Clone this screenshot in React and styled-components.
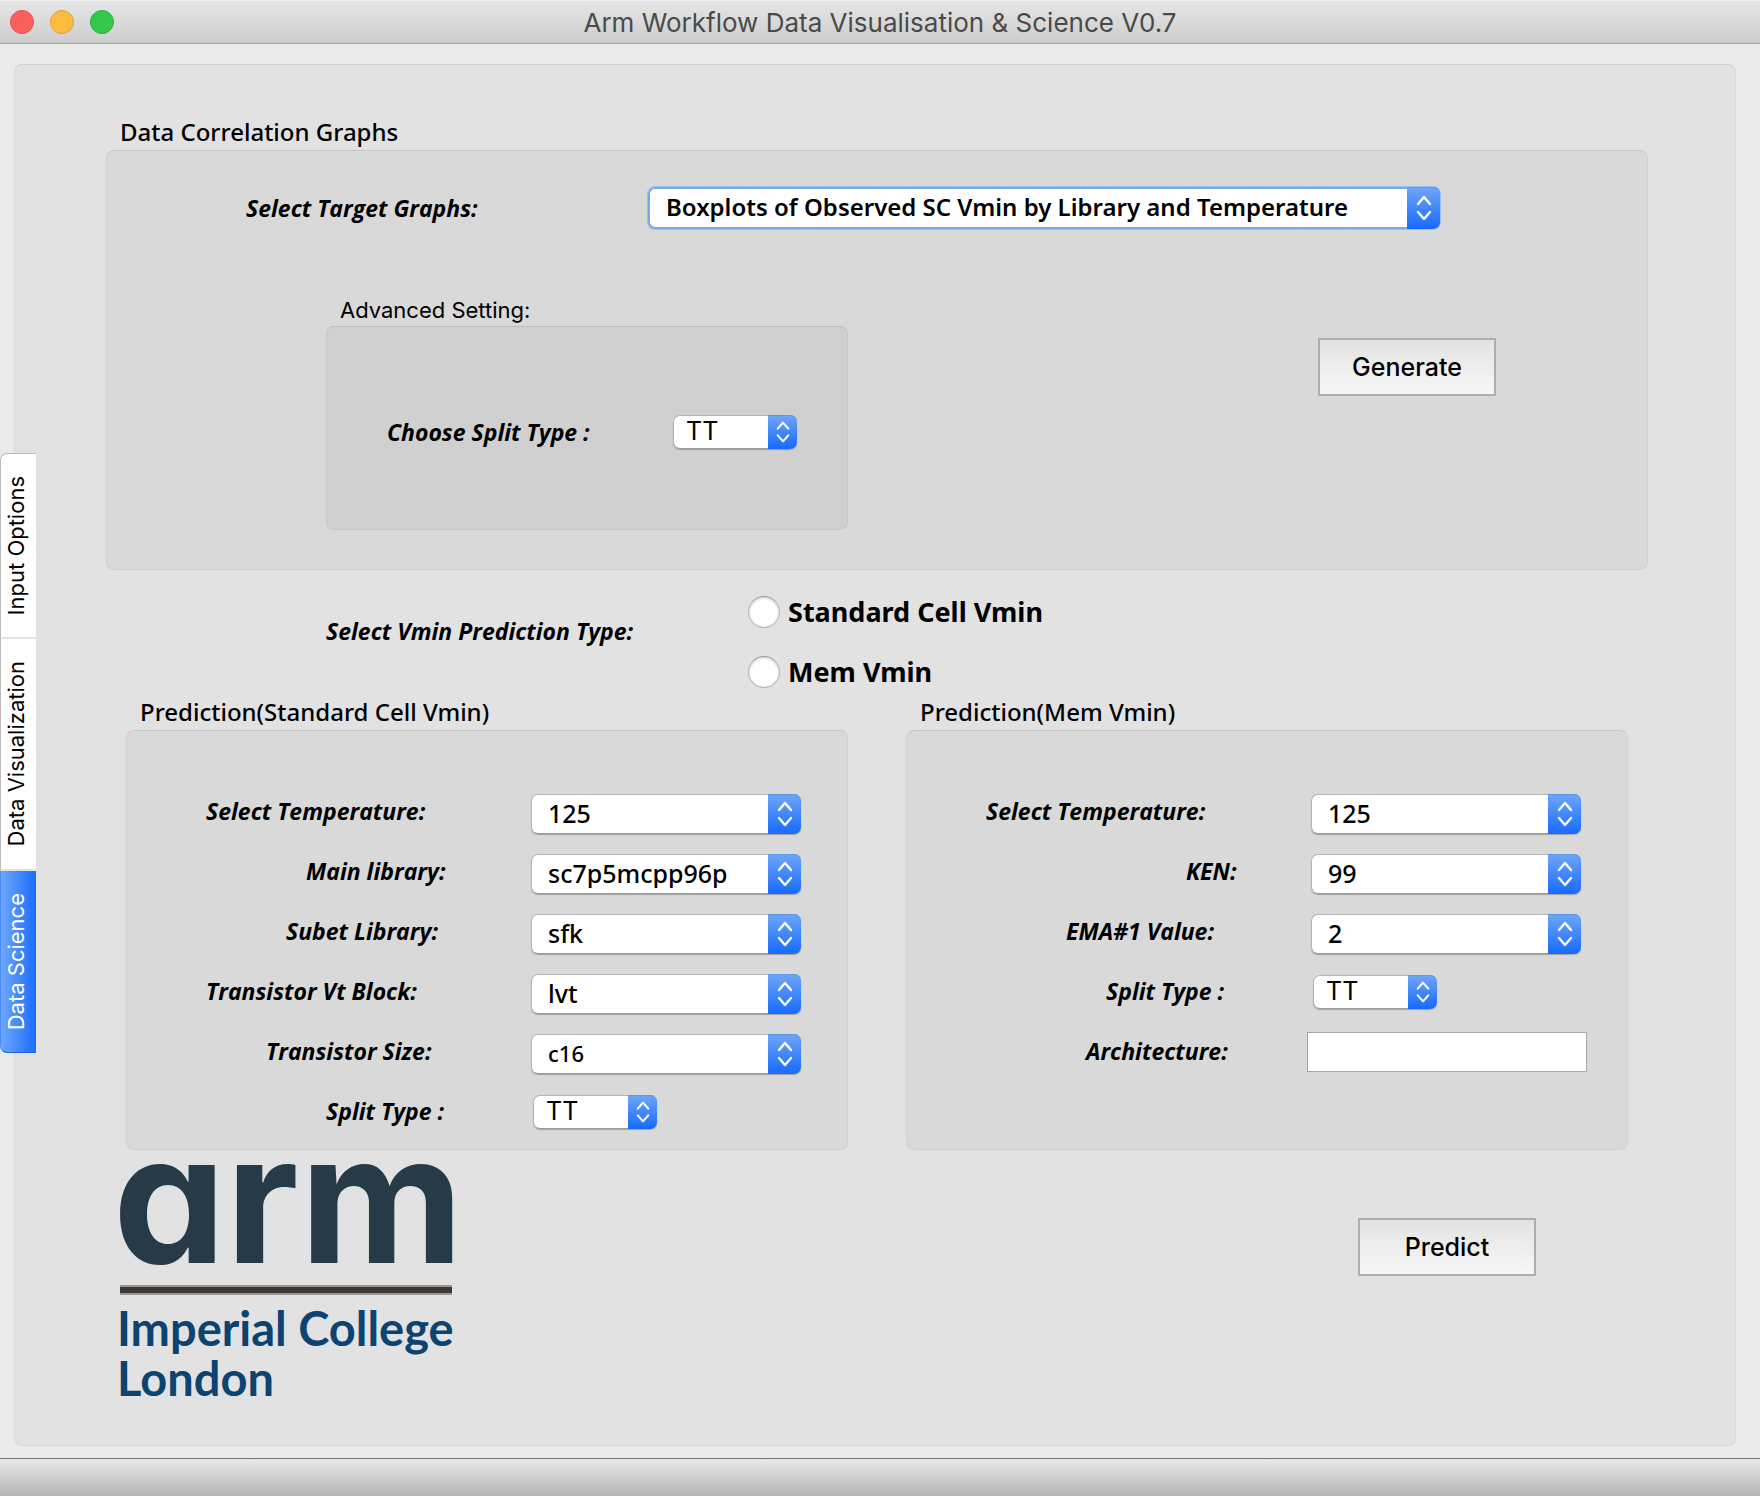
import React from "react";
import styled, { createGlobalStyle, css } from "styled-components";

const systemFont = `Inter, "Liberation Sans", sans-serif`;
const formFont = `"Noto Sans", "Open Sans", sans-serif`;
const labelFont = `"Open Sans", "Noto Sans", sans-serif`;

const GlobalStyle = createGlobalStyle`
  *, *::before, *::after { box-sizing: border-box; }
  body { margin: 0; background: #ebebeb; color: #000; }
`;

const Window = styled.div`
  display: flex;
  flex-direction: column;
  min-height: 100vh;
  font-family: ${systemFont};
`;

const TitleBar = styled.header`
  display: grid;
  grid-template-columns: 140px 1fr 140px;
  align-items: center;
  height: 44px;
  padding: 0 10px;
  background: linear-gradient(#e6e6e6, #cdcdcd);
  border-top: 1px solid #f2f2f2;
  border-bottom: 1px solid #a3a3a3;
`;

const Lights = styled.div`
  display: flex;
  gap: 16px;
`;

const Light = styled.button`
  width: 24px;
  height: 24px;
  padding: 0;
  border: 1px solid ${(p) => p.$edge};
  border-radius: 50%;
  background: ${(p) => p.$fill};
`;

const Title = styled.h1`
  margin: 0;
  padding-top: 2px;
  font-size: 26px;
  line-height: 32px;
  font-weight: 400;
  text-align: center;
  color: #4a4a4a;
`;

const Body = styled.main`
  position: relative;
  flex: 1;
  display: flex;
  padding: 20px 24px 12px 14px;
`;

const TabList = styled.nav`
  position: absolute;
  left: 0;
  top: 4px;
  bottom: 0;
  display: flex;
  flex-direction: column;
  justify-content: center;
`;

const Tab = styled.button`
  display: flex;
  align-items: center;
  justify-content: center;
  width: 36px;
  padding: 22px 6px 22px 0;
  border: 0;
  border-left: 1px solid #b9b9b9;
  border-bottom: 2px solid #e2e2e2;
  background: #fff;
  color: #000;
  font-family: inherit;
  font-size: 22px;
  line-height: 30px;

  &:first-child {
    border-top: 1px solid #b9b9b9;
    border-top-left-radius: 7px;
  }
  &:last-child {
    border-bottom-left-radius: 7px;
  }
  ${(p) =>
    p.$active &&
    css`
      border-left-color: #4a8df5;
      border-bottom: 1px solid #1d62e0;
      background: linear-gradient(90deg, #6ea6fb, #1a6dfc);
      color: #fff;
    `}
`;

const TabText = styled.span`
  writing-mode: vertical-rl;
  transform: rotate(180deg);
`;

const Page = styled.div`
  flex: 1;
  padding: 50px 87px 40px 91px;
  border: 1px solid #d9d9d9;
  border-top-color: #cecece;
  border-radius: 8px;
  background: #e2e2e2;
`;

const GroupTitle = styled.h2`
  margin: 0;
  padding: 0 14px ${(p) => (p.$plain ? 0 : 2)}px;
  font-family: ${(p) => (p.$plain ? systemFont : formFont)};
  font-size: ${(p) => (p.$plain ? 22 : 24)}px;
  line-height: ${(p) => (p.$plain ? 32 : 33)}px;
  font-weight: ${(p) => (p.$plain ? 400 : 500)};
`;

const Box = styled.div`
  border: 1px solid ${(p) => (p.$deep ? "#c8c8c8" : "#d0d0d0")};
  border-top-color: ${(p) => (p.$deep ? "#bdbdbd" : "#c6c6c6")};
  border-radius: 8px;
  background: ${(p) => (p.$deep ? "#d0d0d0" : "#d9d9d9")};
`;

const GraphBox = styled(Box)`
  min-height: 420px;
  padding: 36px 151px 39px 139px;
`;

const TargetRow = styled.div`
  display: grid;
  grid-template-columns: 402px 1fr;
  align-items: center;
  padding-right: 56px;
`;

const SettingRow = styled.div`
  display: flex;
  justify-content: space-between;
  align-items: flex-start;
  margin-top: 65px;
  padding-left: 80px;
`;

const SettingBox = styled(Box)`
  display: flex;
  align-items: center;
  justify-content: space-between;
  width: 522px;
  height: 204px;
  padding: 8px 50px 0 60px;
`;

const FieldLabel = styled.label`
  padding-left: ${(p) => p.$indent || 0}px;
  font-family: ${labelFont};
  font-size: 23px;
  line-height: 32px;
  font-weight: 700;
  font-style: italic;
  white-space: nowrap;
`;

const Button = styled.button`
  width: 178px;
  height: 58px;
  border: 2px solid #adadad;
  background: linear-gradient(#e3e3e3, #f7f7f7);
  font-family: inherit;
  font-size: 25px;
  line-height: 32px;
  font-weight: 500;
  color: #000;
`;

const GenerateButton = styled(Button)`
  margin-top: 44px;
`;

const SelectWrap = styled.span`
  display: grid;
  width: ${(p) => p.$width};
  height: ${(p) => (p.$small ? 34 : 40)}px;
  border-radius: 7px;
  box-shadow: 0 1px 1px rgba(0, 0, 0, 0.25);
  ${(p) =>
    p.$focused &&
    css`
      height: 42px;
      box-shadow: 0 0 0 1px #9cc0ee;
    `}
`;

const NativeSelect = styled.select`
  grid-area: 1 / 1;
  appearance: none;
  width: 100%;
  min-width: 0;
  padding: 0 36px 2px ${(p) => (p.$small ? 12 : 16)}px;
  border: 1px solid #b4b4b4;
  border-bottom-color: #9a9a9a;
  border-radius: 7px;
  background: #fff;
  color: #000;
  font-family: ${(p) => (p.$small ? systemFont : formFont)};
  font-size: ${(p) => (p.$compact ? 22 : 25)}px;
  line-height: 30px;
  font-weight: ${(p) => (p.$small ? 400 : 500)};
  ${(p) =>
    p.$focused &&
    css`
      border: 2px solid #7aa8e2;
      font-size: 24px;
      font-weight: 600;
    `}
`;

const Stepper = styled.span`
  grid-area: 1 / 1;
  justify-self: end;
  display: flex;
  align-items: center;
  justify-content: center;
  width: ${(p) => (p.$small ? 29 : 33)}px;
  border-radius: 0 7px 7px 0;
  background: linear-gradient(#6ea6f8, #176afd);
  box-shadow: inset 0 1px 0 #5f97e6;
  pointer-events: none;
`;

function Select({ id, value, width = "270px", small, compact, focused }) {
  return (
    <SelectWrap $width={small ? "124px" : width} $small={small} $focused={focused}>
      <NativeSelect id={id} defaultValue={value} $small={small} $compact={compact} $focused={focused}>
        <option>{value}</option>
      </NativeSelect>
      <Stepper $small={small}>
        <svg width={small ? 14 : 16} height={small ? 22 : 26} viewBox="0 0 16 26" preserveAspectRatio="none" fill="none" stroke="#fff" strokeWidth="2.4" strokeLinecap="round" strokeLinejoin="round">
          <path d="M2 9 8 2l6 7M2 17l6 7 6-7" />
        </svg>
      </Stepper>
    </SelectWrap>
  );
}

const PredictionType = styled.fieldset`
  display: flex;
  margin: 12px 0 0;
  padding: 0 0 0 220px;
  border: 0;
`;

const TypeCaption = styled.div`
  display: flex;
  align-items: center;
  width: 422px;
  padding-bottom: 22px;
`;

const RadioList = styled.div`
  display: flex;
  flex-direction: column;
`;

const RadioLabel = styled.label`
  display: flex;
  align-items: center;
  gap: 8px;
  height: 60px;
  font-family: ${formFont};
  font-size: 27px;
  line-height: 32px;
  font-weight: 700;
`;

const Radio = styled.input`
  appearance: none;
  width: 32px;
  height: 32px;
  margin: 0;
  border: 1px solid #b5b5b5;
  border-top-color: #999;
  border-radius: 50%;
  background: #fff;
  box-shadow: inset 0 1px 3px rgba(0, 0, 0, 0.2);
`;

const Predictions = styled.div`
  display: grid;
  grid-template-columns: 1fr 1fr;
  gap: 58px;
  margin: -7px 20px 0 20px;
`;

const PredictionBox = styled(Box)`
  display: flex;
  flex-direction: column;
  height: 420px;
  padding: 53px 40px 0 79px;
`;

const FieldRow = styled.div`
  display: flex;
  align-items: center;
  justify-content: space-between;
  height: 60px;

  ${FieldLabel} {
    padding-bottom: 6px;
  }
`;

const FieldControl = styled.div`
  display: flex;
  width: 280px;
  padding-left: ${(p) => p.$inset}px;
  padding-bottom: ${(p) => (p.$raised ? 4 : 0)}px;
`;

const TextInput = styled.input`
  width: 100%;
  height: 40px;
  padding: 0 8px;
  border: 1px solid #a6a6a6;
  background: #fff;
  font-family: ${formFont};
  font-size: 24px;
`;

const Footer = styled.footer`
  display: flex;
  justify-content: space-between;
  align-items: flex-start;
  padding: 12px 112px 0 14px;
`;

const Logo = styled.svg`
  display: block;
  width: 336px;
  height: 236px;
  overflow: visible;
`;

const Wordmark = styled.text`
  font-family: Inter, sans-serif;
  font-size: 179px;
  font-weight: 700;
  font-feature-settings: "cv11";
  fill: #263a47;
`;

const PredictButton = styled(Button)`
  margin-top: 56px;
`;

const StatusBar = styled.div`
  height: 38px;
  border-top: 1px solid #6e6e6e;
  background: linear-gradient(#e8e8e8, #b4b4b4);
`;

const standardFields = [
  { id: "std-temp", label: "Select Temperature:", indent: 0, value: "125" },
  { id: "std-main", label: "Main library:", indent: 100, value: "sc7p5mcpp96p" },
  { id: "std-subset", label: "Subet Library:", indent: 80, value: "sfk" },
  { id: "std-vt", label: "Transistor Vt Block:", indent: 0, value: "lvt" },
  { id: "std-size", label: "Transistor Size:", indent: 60, value: "c16", compact: true },
  { id: "std-split", label: "Split Type :", indent: 120, value: "TT", small: true },
];

const memFields = [
  { id: "mem-temp", label: "Select Temperature:", indent: 0, value: "125" },
  { id: "mem-ken", label: "KEN:", indent: 200, value: "99" },
  { id: "mem-ema", label: "EMA#1 Value:", indent: 80, value: "2" },
  { id: "mem-split", label: "Split Type :", indent: 120, value: "TT", small: true },
  { id: "mem-arch", label: "Architecture:", indent: 100, text: true },
];

function PredictionGroup({ title, fields }) {
  return (
    <section>
      <GroupTitle>{title}</GroupTitle>
      <PredictionBox>
        {fields.map((f) => (
          <FieldRow key={f.id}>
            <FieldLabel htmlFor={f.id} $indent={f.indent}>{f.label}</FieldLabel>
            <FieldControl $inset={f.text ? 0 : f.small ? 6 : 4} $raised={f.text || f.small}>
              {f.text ? <TextInput id={f.id} type="text" /> : <Select {...f} />}
            </FieldControl>
          </FieldRow>
        ))}
      </PredictionBox>
    </section>
  );
}

export default function App() {
  return (
    <Window>
      <GlobalStyle />
      <TitleBar>
        <Lights>
          <Light aria-label="Close" $fill="#fc605c" $edge="#e2514e" />
          <Light aria-label="Minimise" $fill="#fdbc40" $edge="#dfa037" />
          <Light aria-label="Zoom" $fill="#34c84a" $edge="#2bac3a" />
        </Lights>
        <Title>Arm Workflow Data Visualisation &amp; Science V0.7</Title>
      </TitleBar>
      <Body>
        <Page>
          <section>
            <GroupTitle>Data Correlation Graphs</GroupTitle>
            <GraphBox>
              <TargetRow>
                <FieldLabel htmlFor="target">Select Target Graphs:</FieldLabel>
                <Select id="target" focused width="100%" value="Boxplots of Observed SC Vmin by Library and Temperature" />
              </TargetRow>
              <SettingRow>
                <section>
                  <GroupTitle $plain>Advanced Setting:</GroupTitle>
                  <SettingBox $deep>
                    <FieldLabel htmlFor="split">Choose Split Type :</FieldLabel>
                    <Select id="split" small value="TT" />
                  </SettingBox>
                </section>
                <GenerateButton type="button">Generate</GenerateButton>
              </SettingRow>
            </GraphBox>
          </section>
          <PredictionType>
            <TypeCaption>
              <FieldLabel as="span">Select Vmin Prediction Type:</FieldLabel>
            </TypeCaption>
            <RadioList>
              <RadioLabel><Radio type="radio" name="vmin" />Standard Cell Vmin</RadioLabel>
              <RadioLabel><Radio type="radio" name="vmin" />Mem Vmin</RadioLabel>
            </RadioList>
          </PredictionType>
          <Predictions>
            <PredictionGroup title="Prediction(Standard Cell Vmin)" fields={standardFields} />
            <PredictionGroup title="Prediction(Mem Vmin)" fields={memFields} />
          </Predictions>
          <Footer>
            <Logo viewBox="0 0 336 236" role="img" aria-label="arm, Imperial College London">
              <Wordmark x="-7" y="101">arm</Wordmark>
              <rect x="0" y="123" width="332" height="10" fill="#9a9896" />
              <rect x="0" y="125" width="332" height="6" fill="#3c3836" />
              <g fontFamily="Lato, sans-serif" fontSize="47" fontWeight="700" fill="#0c4370">
                <text x="-3" y="184">Imperial College</text>
                <text x="-3" y="234">London</text>
              </g>
            </Logo>
            <PredictButton type="button">Predict</PredictButton>
          </Footer>
        </Page>
        <TabList>
          <Tab type="button"><TabText>Input Options</TabText></Tab>
          <Tab type="button"><TabText>Data Visualization</TabText></Tab>
          <Tab type="button" $active><TabText>Data Science</TabText></Tab>
        </TabList>
      </Body>
      <StatusBar />
    </Window>
  );
}
